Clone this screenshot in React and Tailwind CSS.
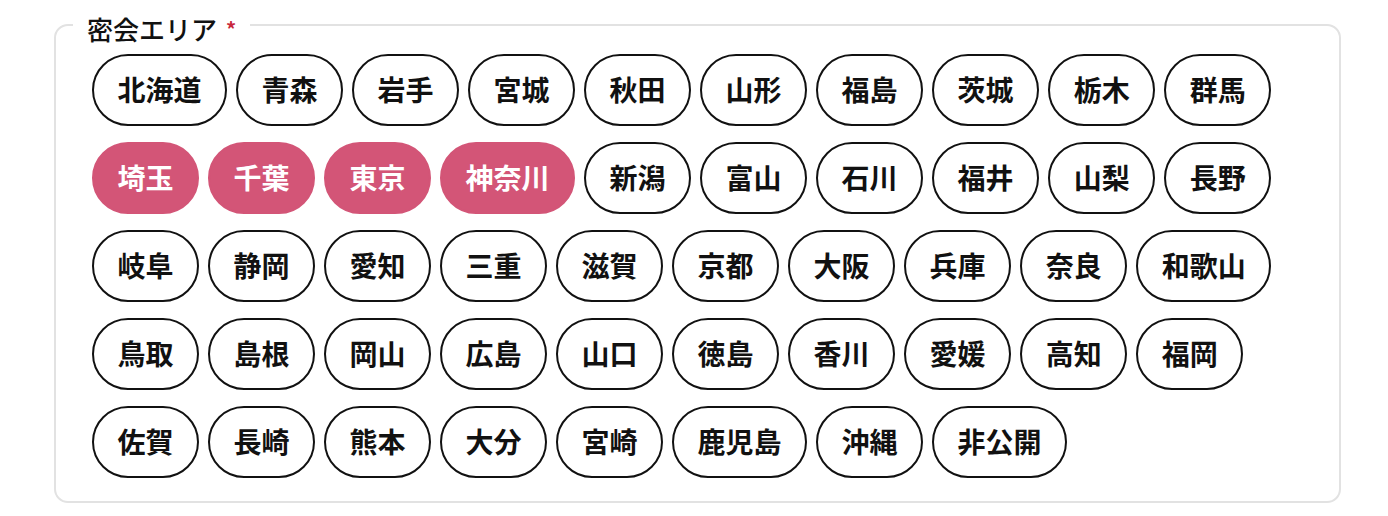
import React, { useState } from "react";

const PREFS = [
  "北海道", "青森", "岩手", "宮城", "秋田", "山形", "福島", "茨城", "栃木", "群馬",
  "埼玉", "千葉", "東京", "神奈川", "新潟", "富山", "石川", "福井", "山梨", "長野",
  "岐阜", "静岡", "愛知", "三重", "滋賀", "京都", "大阪", "兵庫", "奈良", "和歌山",
  "鳥取", "島根", "岡山", "広島", "山口", "徳島", "香川", "愛媛", "高知", "福岡",
  "佐賀", "長崎", "熊本", "大分", "宮崎", "鹿児島", "沖縄", "非公開",
];

const FONT = { fontFamily: '"Hiragino Sans", "Noto Sans CJK JP", sans-serif' };

export default function App() {
  const [selected, setSelected] = useState(["埼玉", "千葉", "東京", "神奈川"]);

  const toggle = (name) => {
    setSelected((prev) =>
      prev.includes(name) ? prev.filter((p) => p !== name) : [...prev, name]
    );
  };

  return (
    <div className="min-h-[516px] bg-white pt-[7px]" style={FONT}>
      <fieldset className="ml-[54px] mr-[47px] rounded-[14px] border-2 border-[#e2e2e2] pb-[23px]">
        <legend className="ml-[17px] px-[14px] pt-[9px] pb-[1px] text-[26px] font-medium leading-[26px] text-[#111]">
          密会エリア
          <span className="ml-[9px] align-top text-[20px] font-bold text-[#c8283c]">*</span>
        </legend>
        <div className="flex flex-wrap gap-x-[9px] gap-y-[16px] pl-[36px] pr-[36px] pt-[11px]">
          {PREFS.map((name) => {
            const on = selected.includes(name);
            return (
              <button
                key={name}
                type="button"
                onClick={() => toggle(name)}
                className={
                  on
                    ? "h-[72px] rounded-full border-2 border-[#d35577] bg-[#d35577] px-[23.5px] pb-[3px] text-[28px] font-bold leading-none text-white"
                    : "h-[72px] rounded-full border-2 border-[#111] bg-white px-[23.5px] pb-[3px] text-[28px] font-bold leading-none text-[#111]"
                }
              >
                {name}
              </button>
            );
          })}
        </div>
      </fieldset>
    </div>
  );
}
